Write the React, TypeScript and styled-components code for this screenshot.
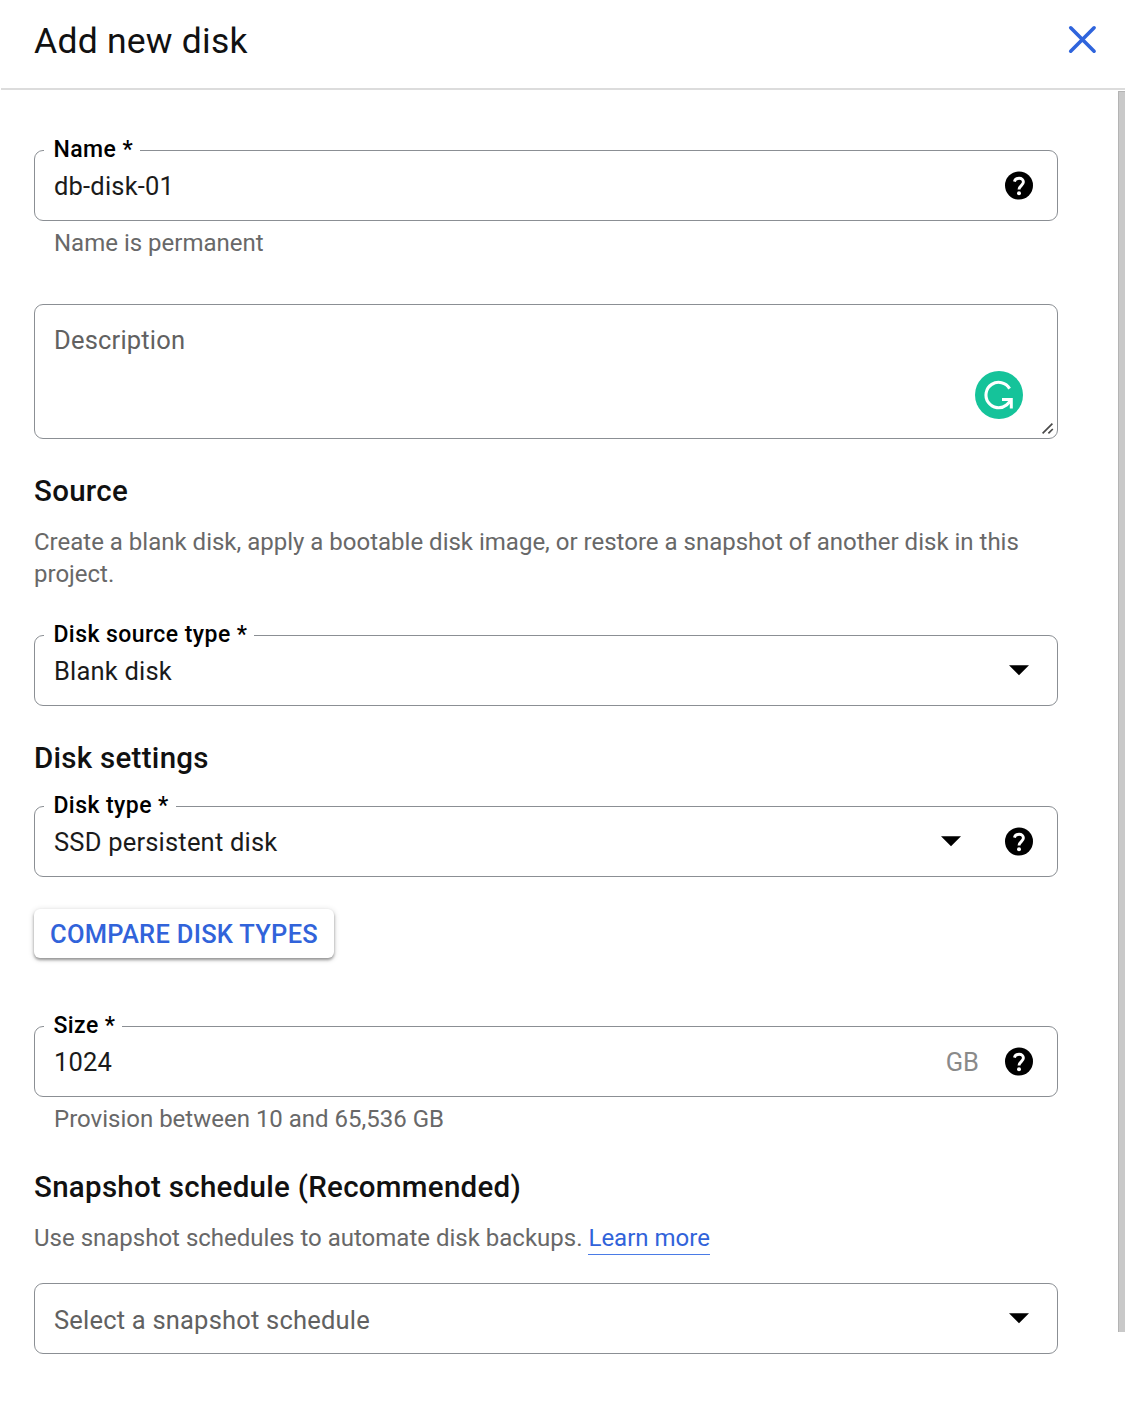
import React from "react";
import styled, { createGlobalStyle } from "styled-components";

const GlobalStyle = createGlobalStyle`
  *, *::before, *::after { box-sizing: border-box; }
  body {
    margin: 0;
    background: #fff;
    font-family: Roboto, "Liberation Sans", sans-serif;
    color: #111;
  }
  h1, h2, p { margin: 0; }
`;

const Panel = styled.div`
  display: flex;
  flex-direction: column;
  width: 1126px;
  height: 1404px;
  background: #fff;
  overflow: hidden;
`;

const Header = styled.header`
  display: flex;
  align-items: center;
  justify-content: space-between;
  height: 90px;
  margin: 0 1px;
  padding: 0 28px 9px 33px;
  border-bottom: 2px solid #dcdcdc;
`;

const Title = styled.h1`
  padding-top: 2px;
  font-size: 35.5px;
  font-weight: 400;
  line-height: 44px;
  letter-spacing: 0.24px;
`;

const CloseButton = styled.button`
  display: flex;
  padding: 0;
  border: 0;
  background: none;
`;

const Body = styled.div`
  display: flex;
  flex: 1;
  justify-content: space-between;
`;

const Form = styled.main`
  display: flex;
  flex-direction: column;
  align-items: stretch;
  width: 1024px;
  margin-left: 34px;
  padding-top: 60px;
`;

const ScrollThumb = styled.div`
  width: 7px;
  height: 1241px;
  margin: 1px 1px 0 0;
  background: #c9c9c9;
  border-left: 1px solid #b4b4b4;
  border-top: 1px solid #b4b4b4;
`;

const Field = styled.div<{ $gap?: number }>`
  position: relative;
  display: flex;
  align-items: center;
  height: 71px;
  margin-top: ${(p) => p.$gap ?? 0}px;
  padding: 0 24px 0 19px;
  border: 1px solid #8b8f94;
  border-radius: 9px;
`;

const FieldLabel = styled.label`
  position: absolute;
  top: -15px;
  left: 9px;
  padding: 0 7px 0 9.4px;
  background: #fff;
  color: #000;
  font-size: 23px;
  font-weight: 500;
  line-height: 28px;
  letter-spacing: 0.44px;
  white-space: nowrap;
`;

const Value = styled.span<{ $muted?: boolean; $drop?: number }>`
  flex: 1;
  padding-top: ${(p) => p.$drop ?? 1}px;
  font-size: 25.5px;
  line-height: 32px;
  letter-spacing: 0.2px;
  color: ${(p) => (p.$muted ? "#616161" : "#1b1b1b")};
`;

const Unit = styled.span`
  margin-right: 26px;
  padding-top: 1px;
  font-size: 25.5px;
  line-height: 32px;
  color: #8a8a8a;
`;

const HelpSlot = styled.span`
  display: flex;
`;

const ArrowSlot = styled.span<{ $end?: boolean }>`
  display: flex;
  margin-right: ${(p) => (p.$end ? 4 : 44)}px;
`;

const Hint = styled.p`
  margin-top: 6px;
  padding-left: 20px;
  font-size: 24px;
  line-height: 32px;
  color: #686868;
`;

const TextArea = styled.div`
  position: relative;
  display: flex;
  align-items: flex-start;
  height: 135px;
  margin-top: 45px;
  padding: 19px;
  border: 1px solid #8b8f94;
  border-radius: 9px;
`;

const Assistant = styled.span`
  position: absolute;
  right: 34px;
  bottom: 19px;
  display: flex;
`;

const Grip = styled.span`
  position: absolute;
  right: 3px;
  bottom: 3px;
  display: flex;
`;

const Heading = styled.h2<{ $gap: number }>`
  margin-top: ${(p) => p.$gap}px;
  font-size: 29.5px;
  font-weight: 500;
  line-height: 36px;
  letter-spacing: 0.28px;
  color: #111;
`;

const Paragraph = styled.p`
  margin-top: 17px;
  font-size: 24px;
  line-height: 32px;
  color: #686868;
`;

const Link = styled.a`
  padding-bottom: 2px;
  border-bottom: 1px solid #4a7be6;
  color: #3163da;
`;

const CompareButton = styled.button`
  align-self: flex-start;
  width: 300px;
  height: 49px;
  margin-top: 32px;
  padding: 0;
  border: 0;
  border-radius: 6px;
  background: #fff;
  box-shadow: 0 2px 3px rgba(0, 0, 0, 0.36), 0 1px 6px rgba(0, 0, 0, 0.16);
  color: #3163da;
  font-family: inherit;
  font-size: 25.5px;
  font-weight: 500;
  line-height: 32px;
  letter-spacing: 0.27px;
  white-space: nowrap;
`;

const CloseIcon = () => (
  <svg width="30" height="30" viewBox="0 0 30 30" fill="none" stroke="#2f64dc" strokeWidth="3.6" strokeLinecap="round">
    <path d="M3.7 2.8 27.1 26.2M27.1 2.8 3.7 26.2" />
  </svg>
);

const HelpIcon = () => (
  <HelpSlot>
    <svg width="28" height="29" viewBox="0 -0.5 28 29" fill="none">
      <circle cx="14" cy="14" r="14" fill="#000" />
      <path
        d="M9.4 10.1C10.1 7.9 11.8 6.7 14.1 6.7c2.5 0 4.3 1.6 4.3 3.9 0 3.3-4.4 3.9-4.4 7.5"
        stroke="#fff"
        strokeWidth="2.9"
      />
      <circle cx="14" cy="21.7" r="2" fill="#fff" />
    </svg>
  </HelpSlot>
);

const Arrow = ({ end }: { end?: boolean }) => (
  <ArrowSlot $end={end}>
    <svg width="20" height="11" viewBox="0 0 20 11">
      <path d="M0 0.2H20L10 10.2Z" fill="#000" />
    </svg>
  </ArrowSlot>
);

const AssistantIcon = () => (
  <svg width="48" height="48" viewBox="0 0 48 48" fill="none">
    <circle cx="24" cy="24" r="24" fill="#15c39a" />
    <path d="M34.6 17.6A12.7 12.7 0 1 0 31.5 34L35.8 29.6" stroke="#fff" strokeWidth="3.1" />
    <path d="M27 28.6H36.3V37.4" stroke="#fff" strokeWidth="3" />
  </svg>
);

const GripIcon = () => (
  <svg width="12" height="12" viewBox="0 0 12 12" stroke="#4a4a4a" strokeWidth="1.7">
    <path d="M0.6 10.4 10.4 0.6M6.4 10.4 10.8 6" />
  </svg>
);

export default function App() {
  return (
    <>
      <GlobalStyle />
      <Panel>
        <Header>
          <Title>Add new disk</Title>
          <CloseButton aria-label="Close">
            <CloseIcon />
          </CloseButton>
        </Header>
        <Body>
          <Form>
            <Field>
              <FieldLabel>Name *</FieldLabel>
              <Value>db-disk-01</Value>
              <HelpIcon />
            </Field>
            <Hint>Name is permanent</Hint>

            <TextArea>
              <Value $muted $drop={0}>
                Description
              </Value>
              <Assistant>
                <AssistantIcon />
              </Assistant>
              <Grip>
                <GripIcon />
              </Grip>
            </TextArea>

            <Heading $gap={34}>Source</Heading>
            <Paragraph>
              Create a blank disk, apply a bootable disk image, or restore a snapshot of another disk in this project.
            </Paragraph>
            <Field $gap={45}>
              <FieldLabel>Disk source type *</FieldLabel>
              <Value $drop={0}>Blank disk</Value>
              <Arrow end />
            </Field>

            <Heading $gap={34}>Disk settings</Heading>
            <Field $gap={30}>
              <FieldLabel>Disk type *</FieldLabel>
              <Value>SSD persistent disk</Value>
              <Arrow />
              <HelpIcon />
            </Field>
            <CompareButton>COMPARE DISK TYPES</CompareButton>

            <Field $gap={68}>
              <FieldLabel>Size *</FieldLabel>
              <Value>1024</Value>
              <Unit>GB</Unit>
              <HelpIcon />
            </Field>
            <Hint>Provision between 10 and 65,536 GB</Hint>

            <Heading $gap={34}>Snapshot schedule (Recommended)</Heading>
            <Paragraph>
              Use snapshot schedules to automate disk backups. <Link>Learn more</Link>
            </Paragraph>
            <Field $gap={29}>
              <Value $muted $drop={3}>
                Select a snapshot schedule
              </Value>
              <Arrow end />
            </Field>
          </Form>
          <ScrollThumb />
        </Body>
      </Panel>
    </>
  );
}
